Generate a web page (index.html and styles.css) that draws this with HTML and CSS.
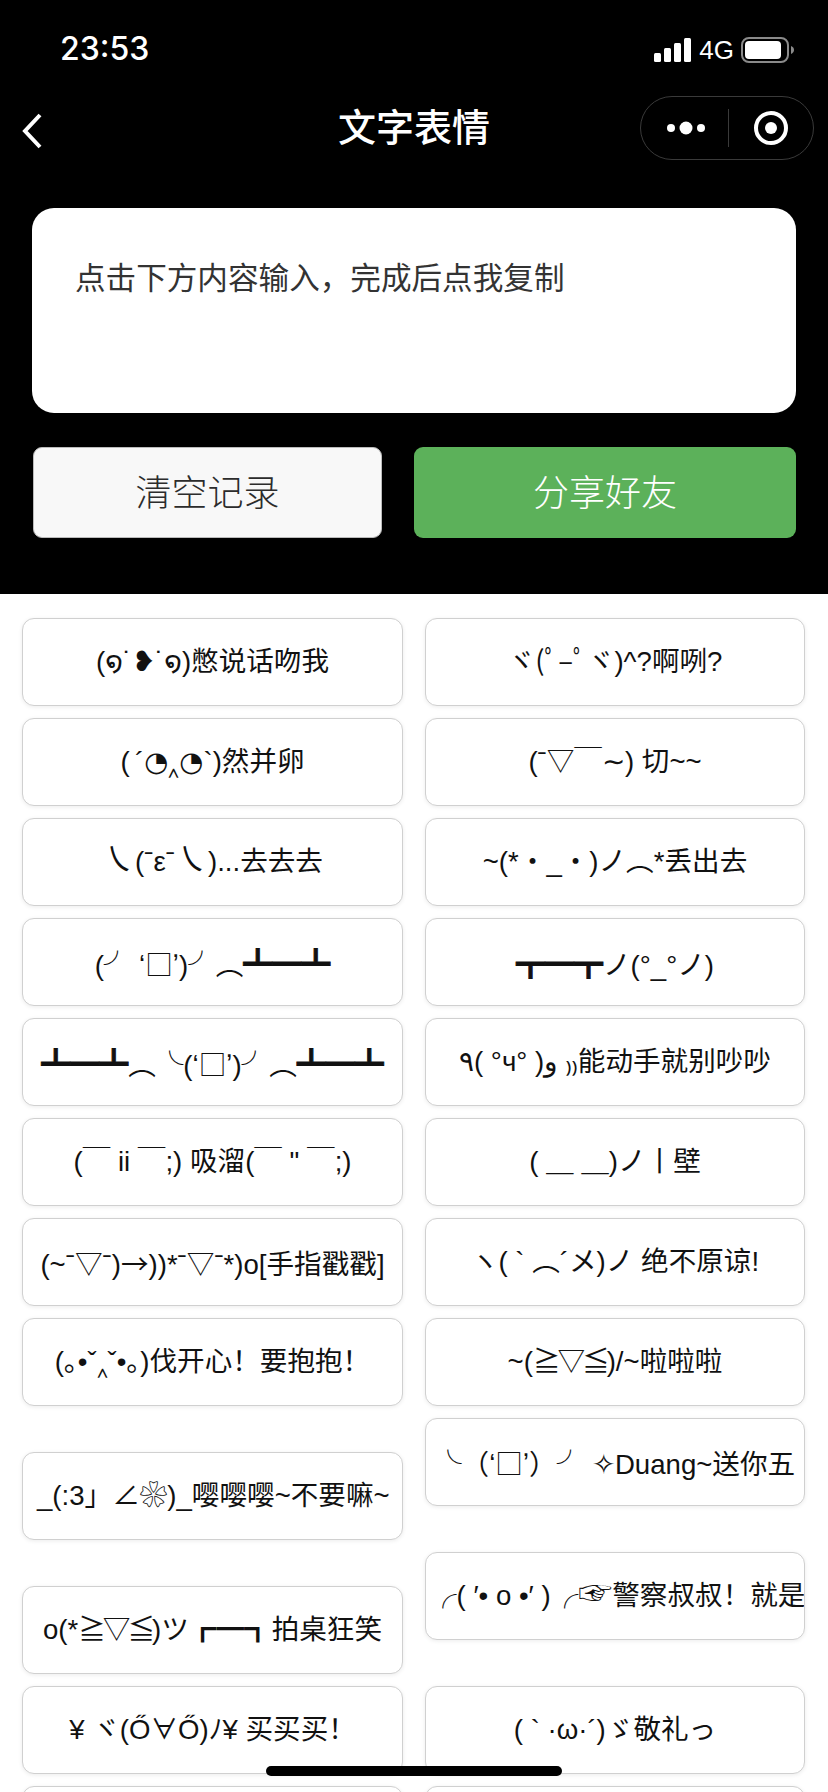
FILE: index.html
```html
<!DOCTYPE html>
<html lang="zh-CN">
<head>
	<meta charset="UTF-8">
	<title>文字表情</title>
	<link rel="stylesheet" href="styles.css">
</head>

<body>
	<div class="page">
		<div class="top">
			<div class="status">
				<span class="time">23:53</span>
				<div class="status-right">
					<svg class="signal" width="37" height="24" viewBox="0 0 37 24">
						<rect x="0" y="15" width="7" height="9" rx="1.5"/>
						<rect x="10" y="10" width="7" height="14" rx="1.5"/>
						<rect x="20" y="5" width="7" height="19" rx="1.5"/>
						<rect x="30" y="0" width="7" height="24" rx="1.5"/>
					</svg>
					<span class="net">4G</span>
					<svg class="battery" width="54" height="26" viewBox="0 0 54 26">
						<rect x="1" y="1" width="46" height="24" rx="7" fill="none" stroke="#8a8a8a" stroke-width="2"/>
						<rect x="4" y="4" width="36" height="18" rx="4" fill="#fff"/>
						<path d="M50 9c2 .8 3 2.200 3 4s-1 3.200-3 4z" fill="#8a8a8a"/>
					</svg>
				</div>
			</div>
			<div class="nav">
				<svg class="back" width="22" height="36" viewBox="0 0 22 36">
					<path d="M19 2 L4 18 L19 34" fill="none" stroke="#fff" stroke-width="4"/>
				</svg>
				<h1 class="title">文字表情</h1>
				<div class="capsule">
					<div class="capsule-btn more">
						<svg width="38" height="14" viewBox="0 0 38 14">
							<circle cx="4" cy="7" r="4" fill="#fff"/>
							<circle cx="19" cy="7" r="6.500" fill="#fff"/>
							<circle cx="34" cy="7" r="4" fill="#fff"/>
						</svg>
					</div>
					<i class="capsule-line"></i>
					<div class="capsule-btn">
						<svg width="36" height="36" viewBox="0 0 36 36">
							<circle cx="18" cy="18" r="15" fill="none" stroke="#fff" stroke-width="4"/>
							<circle cx="18" cy="18" r="6" fill="#fff"/>
						</svg>
					</div>
				</div>
			</div>
			<div class="input-box">点击下方内容输入，完成后点我复制</div>
			<div class="btns">
				<a class="btn btn-clear">清空记录</a>
				<a class="btn btn-share">分享好友</a>
			</div>
		</div>

		<div class="list">
			<div class="item">(<span class="dv">໑</span>˙❥˙<span class="dv">໑</span>)憋说话吻我</div>
			<div class="item">ヾ(ﾟ–ﾟヾ)^?啊咧?</div>
			<div class="item">(&#8201;´<span class="dv">◔</span>‸<span class="dv">◔</span>`)然并卵</div>
			<div class="item">(ˉ▽￣∼) 切~~</div>
			<div class="item"><span class="big">㇏</span>(ˉεˉ<span class="big">㇏</span>)...去去去</div>
			<div class="item">~(*・_・)ノ︵*丢出去</div>
			<div class="item">(╯ ʻ<span class="cjk">□</span>ʼ)╯︵<span class="tb">┻━┻</span></div>
			<div class="item"><span class="tb">┳━┳</span>ノ(°_°ノ)</div>
			<div class="item"><span class="tb">┻━┻</span>︵╰(ʻ<span class="cjk">□</span>ʼ)╯︵<span class="tb">┻━┻</span></div>
			<div class="item">٩( °ч° )و ₎₎能动手就别吵吵</div>
			<div class="item">(￣ ii ￣;) 吸溜(￣ " ￣;)</div>
			<div class="item">( ＿ ＿)ノ丨壁</div>
			<div class="item">(~ˉ▽ˉ)<span class="cjk">→</span>))*ˉ▽ˉ*)o[手指戳戳]</div>
			<div class="item">ヽ( ` ︵´メ)ノ 绝不原谅!</div>
			<div class="item">(｡•ˇ‸ˇ•｡)伐开心！要抱抱！</div>
			<div class="item">~(<span class="tight">≧▽≦</span>)/~啦啦啦</div>
			<div class="item low">_(:3」∠❀)_嘤嘤嘤~不要嘛~</div>
			<div class="item long">╰（ʻ<span class="cjk">□</span>ʼ）╯ ✧Duang~送你五</div>
			<div class="item low">o(*<span class="tight">≧▽≦</span>)ツ┏━┓拍桌狂笑</div>
			<div class="item long long-b">╭( ′• o •′ )╭<span class="hand">☞</span>警察叔叔！就是</div>
			<div class="item">¥ ヾ(Ő∀Ő)ﾉ¥ 买买买！</div>
			<div class="item">( ` ·ω·´)ゞ敬礼っ</div>
			<div class="item"></div>
			<div class="item"></div>
		</div>

		<i class="home-bar"></i>
	</div>
</body>

</html>
```

FILE: styles.css
```css
* {
	margin: 0;
	padding: 0;
	box-sizing: border-box;
}
body {
	background-color: #fff;
	font-family: "Liberation Sans", "Noto Sans CJK SC", sans-serif;
}
.page {
	position: relative;
	width: 828px;
	height: 1792px;
	overflow: hidden;
}

/* black head part */
.top {
	height: 594px;
	background-color: #000;
	color: #fff;
}
.status {
	height: 88px;
	padding: 30px 33px 0 60px;
	display: flex;
	justify-content: space-between;
	align-items: flex-start;
}
.time {
	font-family: Inter, sans-serif;
	font-size: 32px;
	line-height: 38px;
	font-weight: 500;
}
.status-right {
	display: flex;
	align-items: center;
	gap: 7px;
	padding-top: 7px;
}
.signal {
	fill: #fff;
	margin-right: 1px;
}
.net {
	font-size: 26px;
	line-height: 26px;
}
.nav {
	height: 80px;
	padding: 0 14px;
	display: grid;
	grid-template-columns: 1fr auto 1fr;
	align-items: center;
}
.back {
	margin: 5px 0 0 7px;
}
.title {
	font-size: 38px;
	font-weight: 500;
	line-height: 80px;
}
.capsule {
	justify-self: end;
	width: 174px;
	height: 64px;
	border: 1px solid #3a3a3a;
	border-radius: 32px;
	display: flex;
	align-items: center;
}
.capsule-btn {
	flex: 1;
	display: flex;
	justify-content: center;
	align-items: center;
}
.more {
	padding-left: 3px;
}
.capsule-line {
	width: 1px;
	height: 38px;
	background-color: #3a3a3a;
}
.input-box {
	height: 205px;
	margin: 40px 32px 0;
	padding: 47px 43px;
	background-color: #fff;
	border-radius: 22px;
	color: #333;
	font-size: 30.600px;
	line-height: 46px;
}
.btns {
	display: flex;
	gap: 32px;
	margin: 34px 32px 0 33px;
}
.btn {
	height: 91px;
	border-radius: 9px;
	font-size: 36px;
	font-weight: 300;
	line-height: 93px;
	text-align: center;
}
.btn-clear {
	width: 349px;
	background-color: #f8f8f8;
	border: 1px solid #bbb;
	color: #2c2c2c;
	line-height: 91px;
}
.btn-share {
	flex: 1;
	background-color: #5cb15a;
	color: #fff;
}

/* kaomoji list */
.list {
	padding: 24px 23px 0 22px;
	display: grid;
	grid-template-columns: 381px 380px;
	column-gap: 22px;
	align-items: start;
}
.item {
	height: 88px;
	margin-bottom: 12px;
	padding: 0 14px;
	background-color: #fff;
	border: 1px solid #d0d0d0;
	border-radius: 12px;
	box-shadow: 0 1px 4px rgba(0, 0, 0, 0.08);
	color: #111;
	font-size: 27.600px;
	line-height: 86px;
	text-align: center;
	white-space: nowrap;
	overflow: hidden;
}
.dv {
	font-family: "DejaVu Sans", sans-serif;
}
.cjk {
	font-family: "Noto Sans CJK SC", sans-serif;
}
/* table legs need the heavy line */
.tb {
	font-family: "Noto Sans CJK SC", sans-serif;
	font-size: 29px;
	-webkit-text-stroke: 0.8px #111;
}
.big {
	font-size: 33px;
	line-height: 1;
}
.tight {
	letter-spacing: -3px;
}
.hand {
	font-size: 34px;
	line-height: 1;
}
.low {
	margin-top: 34px;
}
.long {
	padding: 0 0 0 8px;
	text-align: left;
}
.long-b {
	padding-left: 3px;
}
.home-bar {
	position: absolute;
	left: 266px;
	bottom: 16px;
	width: 296px;
	height: 10px;
	border-radius: 5px;
	background-color: #000;
}
```
